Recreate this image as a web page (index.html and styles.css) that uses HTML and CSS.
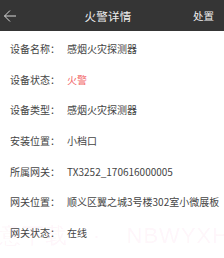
FILE: index.html
```html
<!DOCTYPE html>
<html lang="zh">
<head>
<meta charset="utf-8">
<link rel="stylesheet" href="styles.css">
</head>
<body>
<div class="page">
  <header class="bar">
    <svg class="back" width="14" height="14" viewBox="0 0 14 14"><path d="M13 7H1.5M7 1.5L1.5 7L7 12.5" fill="none" stroke="#d8d8d8" stroke-width="1"/></svg>
    <div class="title">火警详情</div>
    <div class="action">处置</div>
  </header>
  <div class="list">
    <div class="row"><span class="k">设备名称：</span><span class="v">感烟火灾探测器</span></div>
    <div class="row"><span class="k">设备状态：</span><span class="v red">火警</span></div>
    <div class="row"><span class="k">设备类型：</span><span class="v">感烟火灾探测器</span></div>
    <div class="row"><span class="k">安装位置：</span><span class="v">小档口</span></div>
    <div class="row"><span class="k">所属网关：</span><span class="v">TX3252_170616000005</span></div>
    <div class="row"><span class="k">网关位置：</span><span class="v">顺义区翼之城3号楼302室小微展板</span></div>
    <div class="row"><span class="k">网关状态：</span><span class="v">在线</span></div>
  </div>
  <div class="mark">意下载 · NBWYXH.COM.C</div>
</div>
</body>
</html>
```
FILE: styles.css
```css
html, body { margin: 0; padding: 0; }
body {
  width: 224px; height: 258px; overflow: hidden; background: #fff;
  font-family: "Noto Sans CJK SC", "Noto Sans", sans-serif;
}
.page { position: relative; width: 224px; height: 258px; overflow: hidden; }
.bar {
  height: 31px; background: #353535; display: flex; align-items: center;
  padding: 0 10px 0 3px; box-sizing: border-box;
}
.back { display: block; }
.title {
  flex: 1; text-align: center; color: #eeeeee; font-size: 11.5px; letter-spacing: 0.3px;
  margin-left: 6px;
}
.action { color: #eeeeee; font-size: 10.5px; }
.list { padding-top: 2px; }
.row {
  height: 30.7px; display: flex; align-items: center; padding-left: 10px;
  font-size: 10px; color: #444;
}
.k { width: 57px; flex: none; }
.v { white-space: nowrap; }
.red { color: #f26a6a; }
.mark {
  position: absolute; left: -1px; top: 221px; white-space: nowrap;
  font-family: "Liberation Sans", sans-serif; font-size: 22px; color: rgba(250, 120, 190, 0.07);
  letter-spacing: 1px; word-spacing: 18px;
}
```
